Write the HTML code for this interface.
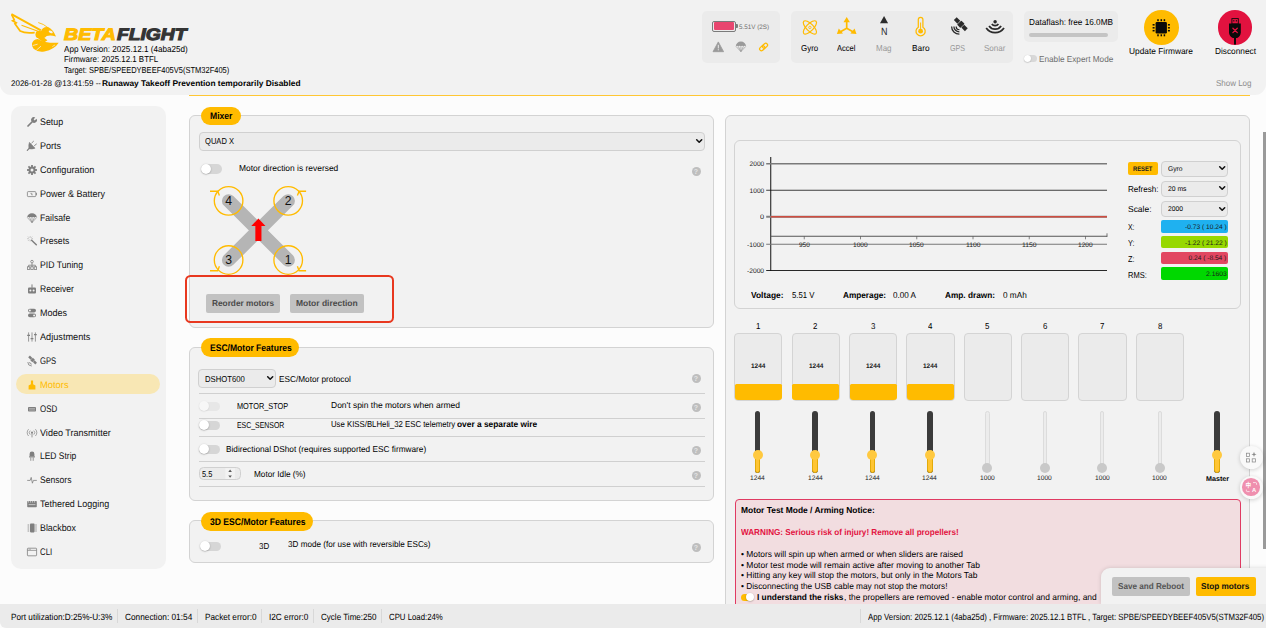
<!DOCTYPE html>
<html lang="en"><head><meta charset="utf-8"><title>Betaflight - Motors</title>
<style>
html,body{margin:0;padding:0}
body{width:1266px;height:628px;overflow:hidden;position:relative;background:#fcfcfc;font-family:"Liberation Sans",sans-serif;font-size:8.5px;color:#000}
div{position:absolute;box-sizing:border-box}
svg{position:absolute;overflow:visible}
.t{position:absolute;white-space:nowrap;line-height:1;display:inline-block;transform-origin:0 0;text-rendering:geometricPrecision}
.panel{background:#f2f2f2;border:1px solid #d3d3d3;border-radius:6px}
.pill{background:#ffbb00;border-radius:10px}
.sel{background:#ebebeb;border:1px solid #d0d0d0;border-radius:4px}
.hr{background:#d0d0d0;height:1px}
.tog{background:#d6d6d6;border-radius:6px}
.knob{background:#fff;border-radius:50%;box-shadow:0 0.5px 1.5px rgba(0,0,0,.35)}
.help{background:#bebebe;border-radius:50%;color:#e4e4e4;font-weight:700;font-size:7px;text-align:center;line-height:9.4px}

</style></head>
<body>
<div class="" style="left:0.00px;top:0.00px;width:1266.00px;height:95.30px;background:#f2f2f2;border-radius:0 0 11px 11px"></div>
<div class="" style="left:188.80px;top:94.80px;width:1061.20px;height:1.00px;background:#ffc733"></div>
<svg style="left:6.00px;top:8.00px" width="64.00" height="50.00" viewBox="0 0 804 628" ><g fill="none" stroke="#ffbb00" stroke-linejoin="miter" stroke-linecap="butt">
<path d="M68,78 L438,282" stroke-width="25"/>
<path d="M72,82 L104,150 L84,160 L128,186 L112,198 L178,290 Q240,322 362,308" stroke-width="22"/>
<path d="M195,218 L402,292" stroke-width="13"/>
<path d="M405,183 Q470,198 528,248" stroke-width="11"/>
</g>
<g fill="#ffbb00">
<path d="M436,300 Q455,232 528,238 Q592,268 628,358 Q560,338 512,352 Q480,392 446,372 Z"/>
<circle cx="414" cy="332" r="46"/>
<path d="M385,362 Q420,410 480,432 L520,404 Q478,386 466,346 Z"/>
<path d="M326,446 Q336,398 400,388 Q500,446 662,436 Q610,520 482,546 Q400,560 346,512 Q320,482 326,446 Z"/>
</g>
<ellipse cx="562" cy="300" rx="27" ry="14" transform="rotate(24 562 300)" fill="#f2f2f2"/>
<g stroke="#f2f2f2" fill="none" stroke-linecap="round">
<path d="M368,300 Q350,340 372,376" stroke-width="8"/>
<path d="M340,470 L392,456" stroke-width="9"/>
<path d="M384,528 L436,482" stroke-width="9"/>
<path d="M586,482 L612,466" stroke-width="8"/>
</g></svg>
<span class="t" style="left:63.90px;top:27.22px;font-size:16.6px;font-weight:700;color:#ffbb00;font-style:italic;transform:scaleX(1.1808);-webkit-text-stroke:1.05px #ffbb00;">BETA</span>
<span class="t" style="left:116.60px;top:27.22px;font-size:16.6px;font-weight:700;color:#343434;font-style:italic;transform:scaleX(1.1582);-webkit-text-stroke:1.05px #343434;">FLIGHT</span>
<span class="t" style="left:63.75px;top:44.67px;font-size:8.7px;transform:scaleX(0.9351);">App Version: 2025.12.1 (4aba25d)</span>
<span class="t" style="left:63.75px;top:54.67px;font-size:8.7px;transform:scaleX(0.9121);">Firmware: 2025.12.1 BTFL</span>
<span class="t" style="left:63.75px;top:65.67px;font-size:8.7px;transform:scaleX(0.8642);">Target: SPBE/SPEEDYBEEF405V5(STM32F405)</span>
<span class="t" style="left:10.50px;top:80.42px;font-size:8.2px;transform:scaleX(0.9774);">2026-01-28 @13:41:59 -- </span>
<span class="t" style="left:102.00px;top:80.42px;font-size:8.2px;font-weight:700;transform:scaleX(1.0201);">Runaway Takeoff Prevention temporarily Disabled</span>
<div class="" style="left:702.00px;top:10.50px;width:78.00px;height:52.50px;background:#ebebeb;border-radius:5px"></div>
<div class="" style="left:712.00px;top:20.50px;width:24.00px;height:11.00px;border:1px solid #7a7a7a;border-radius:2px;background:#ebebeb"></div>
<div class="" style="left:713.60px;top:22.10px;width:20.80px;height:7.80px;background:#e8466f;border-radius:1px"></div>
<div class="" style="left:736.00px;top:24.00px;width:1.60px;height:4.00px;background:#7a7a7a;border-radius:0 1px 1px 0"></div>
<span class="t" style="left:739.00px;top:25.32px;font-size:6.4px;color:#6e6e6e;transform:scaleX(0.9816);">5.51V (2S)</span>
<svg style="left:0.00px;top:0.00px" width="1266.00" height="628.00" viewBox="0 0 1266 628" ><path d="M718.3,41.9 L723.6,51.7 L713,51.7 Z" fill="#9a9a9a" stroke="#9a9a9a" stroke-width="0.8" stroke-linejoin="round"/><rect x="717.8" y="44.8" width="1" height="3.6" fill="#ebebeb"/><rect x="717.8" y="49.2" width="1" height="1.1" fill="#ebebeb"/><path d="M735.8,46.2 A5.1,4.6 0 0 1 746,46.2 Q744.7,45.2 743.4,46.2 Q742.2,45.2 740.9,46.2 Q739.6,45.2 738.3,46.2 Q737,45.2 735.8,46.2 Z" fill="#9a9a9a"/><path d="M736,46.4 L740.9,51.6 L745.8,46.4 M738.3,46.4 L740.9,51.6 L743.4,46.4 M740.9,46.4 L740.9,51.6" stroke="#9a9a9a" stroke-width="0.7" fill="none"/><g transform="rotate(-42 763.6 47)" fill="none" stroke="#ffbb00" stroke-width="1.25"><rect x="758.9" y="45.2" width="5.6" height="3.6" rx="1.8"/><rect x="762.7" y="45.2" width="5.6" height="3.6" rx="1.8"/></g></svg>
<div class="" style="left:791.00px;top:10.50px;width:222.00px;height:52.50px;background:#ebebeb;border-radius:5px"></div>
<svg style="left:0.00px;top:0.00px" width="1266.00" height="628.00" viewBox="0 0 1266 628" ><g fill="none" stroke="#ffbb00" stroke-width="1.2"><ellipse cx="809.9" cy="27.4" rx="8.7" ry="3.5" transform="rotate(45 809.9 27.4)"/><ellipse cx="809.9" cy="27.4" rx="8.7" ry="3.5" transform="rotate(-45 809.9 27.4)"/><circle cx="809.9" cy="27.4" r="1.2" stroke-width="0.8"/></g><g stroke="#ffbb00" stroke-width="1.7" fill="none" stroke-linecap="round"><path d="M846.7,28.2 L846.7,19.5 M846.7,28.2 L839.6,32.2 M846.7,28.2 L853.8,32.2"/></g><g fill="#ffbb00"><path d="M846.7,16.9 L849.9,22.2 L843.5,22.2 Z"/><path d="M836.9,34 L838.8,28.6 L843,33.6 Z"/><path d="M856.5,34 L854.6,28.6 L850.4,33.6 Z"/></g><path d="M884.05,16 L888.1,23.2 L880,23.2 Z" fill="#2b2b2b"/><path d="M918.3000000000001,27.2 L918.3000000000001,19.6 A2.3,2.3 0 0 1 922.9,19.6 L922.9,27.2 A4.6,4.6 0 1 1 918.3000000000001,27.2 Z" fill="none" stroke="#ffbb00" stroke-width="1.25"/><circle cx="920.6" cy="31.2" r="2.4" fill="#ffbb00"/><rect x="920.1" y="22.5" width="1" height="7" fill="#ffbb00"/><g transform="rotate(45 960.8 24.2)" fill="#2b2b2b"><rect x="953" y="22.2" width="5" height="4"/><rect x="963.6" y="22.2" width="5" height="4"/><rect x="958.5" y="21.2" width="4.6" height="6" rx="0.6"/></g><g fill="none" stroke="#2b2b2b" stroke-width="1.3"><path d="M956.2,26.4 A3.2,3.2 0 0 0 959.4,29.6"/><path d="M953.9,26.4 A5.5,5.5 0 0 0 959.4,31.9"/><path d="M951.6,26.4 A7.8,7.8 0 0 0 959.4,34.2"/></g><circle cx="995.1" cy="21.7" r="1.75" fill="#2b2b2b"/><path d="M998.38,23.99 A4.0,4.0 0 0 1 991.82,23.99" fill="none" stroke="#2b2b2b" stroke-width="1.7"/><path d="M1001.16,25.94 A7.4,7.4 0 0 1 989.04,25.94" fill="none" stroke="#2b2b2b" stroke-width="1.7"/><path d="M1004.03,27.95 A10.9,10.9 0 0 1 986.17,27.95" fill="none" stroke="#2b2b2b" stroke-width="1.7"/></svg>
<span class="t" style="left:880.80px;top:28.32px;font-size:10.4px;color:#2b2b2b;transform:scaleX(0.8649);">N</span>
<span class="t" style="left:800.50px;top:43.72px;font-size:8.6px;transform:scaleX(0.9262);">Gyro</span>
<span class="t" style="left:836.75px;top:43.72px;font-size:8.6px;transform:scaleX(0.8803);">Accel</span>
<span class="t" style="left:875.75px;top:43.72px;font-size:8.6px;color:#999;transform:scaleX(0.9271);">Mag</span>
<span class="t" style="left:911.50px;top:43.72px;font-size:8.6px;transform:scaleX(0.9639);">Baro</span>
<span class="t" style="left:950.00px;top:43.72px;font-size:8.6px;color:#999;transform:scaleX(0.8262);">GPS</span>
<span class="t" style="left:983.75px;top:43.72px;font-size:8.6px;color:#999;transform:scaleX(0.9373);">Sonar</span>
<div class="" style="left:1023.75px;top:10.50px;width:94.25px;height:31.50px;background:#ebebeb;border-radius:5px"></div>
<span class="t" style="left:1029.00px;top:17.72px;font-size:8.6px;transform:scaleX(0.9556);">Dataflash: free 16.0MB</span>
<div class="" style="left:1029.00px;top:32.75px;width:79.25px;height:3.75px;background:#c4c4c4;border-radius:2px"></div>
<div class="" style="left:1024.00px;top:55.20px;width:12.80px;height:6.90px;background:#d8d8d8;border-radius:4px"></div>
<div class="knob" style="left:1023.60px;top:54.90px;width:7.40px;height:7.40px;box-shadow:0 0.5px 1.2px rgba(0,0,0,.28)"></div>
<span class="t" style="left:1039.00px;top:54.72px;font-size:8.6px;color:#6e6e6e;transform:scaleX(0.9535);">Enable Expert Mode</span>
<div class="" style="left:1144.00px;top:10.25px;width:34.50px;height:34.50px;background:#ffbb00;border-radius:50%"></div>
<div class="" style="left:1217.75px;top:10.25px;width:34.50px;height:34.50px;background:#e2123f;border-radius:50%"></div>
<svg style="left:0.00px;top:0.00px" width="1266.00" height="628.00" viewBox="0 0 1266 628" ><rect x="1155.6" y="22.1" width="11.3" height="11.3" rx="1.2" fill="#0a0a0a"/><rect x="1157.25" y="19.2" width="1.5" height="2" fill="#0a0a0a"/><rect x="1157.25" y="34.3" width="1.5" height="2" fill="#0a0a0a"/><rect x="1160.55" y="19.2" width="1.5" height="2" fill="#0a0a0a"/><rect x="1160.55" y="34.3" width="1.5" height="2" fill="#0a0a0a"/><rect x="1163.65" y="19.2" width="1.5" height="2" fill="#0a0a0a"/><rect x="1163.65" y="34.3" width="1.5" height="2" fill="#0a0a0a"/><rect x="1152.6" y="24.05" width="2" height="1.5" fill="#0a0a0a"/><rect x="1167.9" y="24.05" width="2" height="1.5" fill="#0a0a0a"/><rect x="1152.6" y="27.05" width="2" height="1.5" fill="#0a0a0a"/><rect x="1167.9" y="27.05" width="2" height="1.5" fill="#0a0a0a"/><rect x="1152.6" y="29.95" width="2" height="1.5" fill="#0a0a0a"/><rect x="1167.9" y="29.95" width="2" height="1.5" fill="#0a0a0a"/><rect x="1231.9" y="18.6" width="6.4" height="5.4" fill="none" stroke="#0a0a0a" stroke-width="0.9"/><rect x="1233.2" y="20.2" width="1.2" height="1.2" fill="#0a0a0a"/><rect x="1235.8" y="20.2" width="1.2" height="1.2" fill="#0a0a0a"/><path d="M1229,23.6 L1240.8,23.6 L1240.8,32.6 Q1240.6,36.4 1237.2,37.9 L1232.8,37.9 Q1229.2,36.4 1229,32.6 Z" fill="#0a0a0a"/><rect x="1234" y="37.5" width="2" height="7" fill="#0a0a0a"/><path d="M1232.9,28.2 L1237.3,32.6 M1237.3,28.2 L1232.9,32.6" stroke="#e2123f" stroke-width="1.3" stroke-linecap="round"/></svg>
<span class="t" style="left:1129.25px;top:46.72px;font-size:8.6px;transform:scaleX(0.9711);">Update Firmware</span>
<span class="t" style="left:1214.50px;top:46.72px;font-size:8.6px;transform:scaleX(0.9644);">Disconnect</span>
<span class="t" style="left:1216.00px;top:78.72px;font-size:8.6px;color:#8c8c8c;transform:scaleX(0.9285);">Show Log</span>
<div class="" style="left:10.50px;top:106.00px;width:155.00px;height:463.30px;background:#f2f2f2;border-radius:10px"></div>
<div class="" style="left:16.00px;top:373.70px;width:144.00px;height:20.80px;background:#f8e7b4;border-radius:10.5px"></div>
<span class="t" style="left:39.70px;top:117.72px;font-size:9.6px;color:#111;transform:scaleX(0.9211);">Setup</span>
<span class="t" style="left:39.70px;top:141.72px;font-size:9.6px;color:#111;transform:scaleX(0.9417);">Ports</span>
<span class="t" style="left:39.70px;top:165.72px;font-size:9.6px;color:#111;transform:scaleX(0.9531);">Configuration</span>
<span class="t" style="left:39.70px;top:189.72px;font-size:9.6px;color:#111;transform:scaleX(0.9376);">Power &amp; Battery</span>
<span class="t" style="left:39.70px;top:213.72px;font-size:9.6px;color:#111;transform:scaleX(0.9020);">Failsafe</span>
<span class="t" style="left:39.70px;top:236.72px;font-size:9.6px;color:#111;transform:scaleX(0.9037);">Presets</span>
<span class="t" style="left:39.70px;top:260.72px;font-size:9.6px;color:#111;transform:scaleX(0.9059);">PID Tuning</span>
<span class="t" style="left:39.70px;top:284.72px;font-size:9.6px;color:#111;transform:scaleX(0.8928);">Receiver</span>
<span class="t" style="left:39.70px;top:308.72px;font-size:9.6px;color:#111;transform:scaleX(0.9411);">Modes</span>
<span class="t" style="left:39.70px;top:332.72px;font-size:9.6px;color:#111;transform:scaleX(0.9546);">Adjustments</span>
<span class="t" style="left:39.70px;top:356.72px;font-size:9.6px;color:#111;transform:scaleX(0.7994);">GPS</span>
<span class="t" style="left:39.70px;top:380.72px;font-size:9.6px;color:#ffbb00;transform:scaleX(0.9752);">Motors</span>
<span class="t" style="left:39.70px;top:404.72px;font-size:9.6px;color:#111;transform:scaleX(0.8270);">OSD</span>
<span class="t" style="left:39.70px;top:428.72px;font-size:9.6px;color:#111;transform:scaleX(0.9425);">Video Transmitter</span>
<span class="t" style="left:39.70px;top:451.72px;font-size:9.6px;color:#111;transform:scaleX(0.8840);">LED Strip</span>
<span class="t" style="left:39.70px;top:475.72px;font-size:9.6px;color:#111;transform:scaleX(0.8948);">Sensors</span>
<span class="t" style="left:39.70px;top:499.72px;font-size:9.6px;color:#111;transform:scaleX(0.9332);">Tethered Logging</span>
<span class="t" style="left:39.70px;top:523.72px;font-size:9.6px;color:#111;transform:scaleX(0.9220);">Blackbox</span>
<span class="t" style="left:39.70px;top:547.72px;font-size:9.6px;color:#111;transform:scaleX(0.8167);">CLI</span>
<svg style="left:26.80px;top:116.70px" width="10.00" height="10.00" viewBox="0 0 10 10" ><path d="M1,9 L6,4" stroke="#7f7f7f" stroke-width="1.7" stroke-linecap="round" fill="none"/><path d="M5.2,4.8 A2.6,2.6 0 0 1 8.3,0.6 L6.6,2.3 L7.7,3.4 L9.4,1.7 A2.6,2.6 0 0 1 5.2,4.8 Z" fill="#7f7f7f"/></svg><svg style="left:26.80px;top:140.70px" width="10.00" height="10.00" viewBox="0 0 10 10" ><path d="M0.3,9.3 L2.4,7.2" stroke="#7f7f7f" stroke-width="1.2" fill="none" stroke-linecap="round"/><path d="M2.4,1.3 L8.1,7.2 Q4.6,8.6 1.9,7.7 Q1.2,4.4 2.4,1.3 Z" fill="#7f7f7f" stroke="#7f7f7f" stroke-width="0.5" stroke-linejoin="round"/><path d="M4.8,1.9 L6.5,0.3 M7.5,4.6 L9.4,3.1" stroke="#7f7f7f" stroke-width="0.9" fill="none" stroke-linecap="round"/></svg><svg style="left:26.80px;top:164.70px" width="10.00" height="10.00" viewBox="0 0 10 10" ><rect x="4.1" y="0" width="1.8" height="2.4" transform="rotate(0 5 5)" fill="#7f7f7f"/><rect x="4.1" y="0" width="1.8" height="2.4" transform="rotate(45 5 5)" fill="#7f7f7f"/><rect x="4.1" y="0" width="1.8" height="2.4" transform="rotate(90 5 5)" fill="#7f7f7f"/><rect x="4.1" y="0" width="1.8" height="2.4" transform="rotate(135 5 5)" fill="#7f7f7f"/><rect x="4.1" y="0" width="1.8" height="2.4" transform="rotate(180 5 5)" fill="#7f7f7f"/><rect x="4.1" y="0" width="1.8" height="2.4" transform="rotate(225 5 5)" fill="#7f7f7f"/><rect x="4.1" y="0" width="1.8" height="2.4" transform="rotate(270 5 5)" fill="#7f7f7f"/><rect x="4.1" y="0" width="1.8" height="2.4" transform="rotate(315 5 5)" fill="#7f7f7f"/><circle cx="5" cy="5" r="3.5" fill="#7f7f7f"/><circle cx="5" cy="5" r="1.5" fill="#f2f2f2"/></svg><svg style="left:26.80px;top:188.70px" width="10.00" height="10.00" viewBox="0 0 10 10" ><rect x="0.4" y="2.6" width="8.4" height="5" rx="0.8" fill="none" stroke="#7f7f7f" stroke-width="0.8"/><rect x="9" y="4" width="0.8" height="2.2" fill="#7f7f7f"/><path d="M3.4,4.4 L5,4.4 L4.4,5.8 L6,5.8" stroke="#7f7f7f" stroke-width="0.6" fill="none"/></svg><svg style="left:26.80px;top:212.70px" width="10.00" height="10.00" viewBox="0 0 10 10" ><path d="M0.2,4.4 A4.8,4.2 0 0 1 9.8,4.4 Q8.6,3.5 7.4,4.4 Q6.2,3.5 5,4.4 Q3.8,3.5 2.6,4.4 Q1.4,3.5 0.2,4.4 Z" fill="#7f7f7f"/><path d="M0.4,4.6 L5,9.6 L9.6,4.6 M2.6,4.6 L5,9.6 L7.4,4.6 M5,4.6 L5,9.6" stroke="#7f7f7f" stroke-width="0.6" fill="none"/></svg><svg style="left:26.80px;top:235.70px" width="10.00" height="10.00" viewBox="0 0 10 10" ><path d="M4.6,4.3 L9.3,8.7" stroke="#7f7f7f" stroke-width="1.5" fill="none" stroke-linecap="round"/><path d="M3.2,0.2 L3.2,1.6 M3.2,3.8 L3.2,5.4 M0.2,2.7 L1.8,2.7 M4.4,2.7 L6,2.7 M1,0.6 L2.2,1.8 M5.2,0.7 L4.2,1.7 M1.1,4.8 L2.2,3.7" stroke="#a0a0a0" stroke-width="0.6" fill="none"/></svg><svg style="left:26.80px;top:259.70px" width="10.00" height="10.00" viewBox="0 0 10 10" ><circle cx="5" cy="1.6" r="1.3" fill="none" stroke="#7f7f7f" stroke-width="0.8"/><path d="M5,3 L5,7 M1.6,7 L1.6,5.2 L8.4,5.2 L8.4,7" stroke="#7f7f7f" stroke-width="0.8" fill="none"/><rect x="0.4" y="6.8" width="2.4" height="2.6" fill="none" stroke="#7f7f7f" stroke-width="0.8"/><rect x="3.8" y="6.8" width="2.4" height="2.6" fill="none" stroke="#7f7f7f" stroke-width="0.8"/><rect x="7.2" y="6.8" width="2.4" height="2.6" fill="none" stroke="#7f7f7f" stroke-width="0.8"/></svg><svg style="left:26.80px;top:283.70px" width="10.00" height="10.00" viewBox="0 0 10 10" ><rect x="1" y="3.6" width="8" height="6" rx="1" fill="#7f7f7f"/><rect x="4.5" y="0.4" width="1" height="3.4" fill="#7f7f7f"/><circle cx="3.4" cy="6.4" r="1" fill="#f2f2f2"/><circle cx="6.6" cy="6.4" r="1" fill="#f2f2f2"/></svg><svg style="left:26.80px;top:307.70px" width="10.00" height="10.00" viewBox="0 0 10 10" ><rect x="1" y="0.8" width="8" height="3.6" rx="1.8" fill="#7f7f7f"/><rect x="1" y="5.6" width="8" height="3.6" rx="1.8" fill="#7f7f7f"/><circle cx="2.9" cy="2.6" r="1" fill="#f2f2f2"/><circle cx="7.1" cy="7.4" r="1" fill="#f2f2f2"/></svg><svg style="left:26.80px;top:331.70px" width="10.00" height="10.00" viewBox="0 0 10 10" ><path d="M1.6,0.4 L1.6,9.6 M5,0.4 L5,9.6 M8.4,0.4 L8.4,9.6" stroke="#7f7f7f" stroke-width="0.8" fill="none"/><path d="M0.2,3.4 L3,3.4 M3.6,6.6 L6.4,6.6 M7,2.6 L9.8,2.6" stroke="#7f7f7f" stroke-width="1.3" fill="none"/></svg><svg style="left:26.80px;top:355.70px" width="10.00" height="10.00" viewBox="0 0 10 10" ><g transform="rotate(45 5.6 4)" fill="#7f7f7f"><rect x="0.6" y="2.8" width="3.4" height="2.4"/><rect x="7.2" y="2.8" width="3.4" height="2.4"/><rect x="4.2" y="2.2" width="2.8" height="3.6"/></g><path d="M2.6,6 A2.2,2.2 0 0 0 4.8,8.2 M0.8,6 A4,4 0 0 0 4.8,10" stroke="#7f7f7f" stroke-width="0.8" fill="none"/></svg><svg style="left:26.80px;top:379.70px" width="10.00" height="10.00" viewBox="0 0 10 10" ><path d="M3.9,0.6 L6.1,0.6 L6.1,4.2 L8.4,5.4 L8.4,9.6 L1.6,9.6 L1.6,5.4 L3.9,4.2 Z" fill="#ffbb00"/></svg><svg style="left:26.80px;top:403.70px" width="10.00" height="10.00" viewBox="0 0 10 10" ><rect x="1" y="3" width="8" height="4.6" rx="0.8" fill="#7f7f7f"/><path d="M2,4.6 L8,4.6 M2,6 L8,6" stroke="#f2f2f2" stroke-width="0.4"/></svg><svg style="left:26.80px;top:427.70px" width="10.00" height="10.00" viewBox="0 0 10 10" ><circle cx="5" cy="4.6" r="1" fill="#7f7f7f"/><rect x="4.6" y="5" width="0.8" height="4.4" fill="#7f7f7f"/><path d="M3.2,2.6 A2.8,2.8 0 0 0 3.2,6.6 M6.8,2.6 A2.8,2.8 0 0 1 6.8,6.6 M1.6,1.2 A4.8,4.8 0 0 0 1.6,8 M8.4,1.2 A4.8,4.8 0 0 1 8.4,8" stroke="#7f7f7f" stroke-width="0.7" fill="none"/></svg><svg style="left:26.80px;top:450.70px" width="10.00" height="10.00" viewBox="0 0 10 10" ><path d="M2.6,5.6 L2.6,3 A2.4,2.4 0 0 1 7.4,3 L7.4,5.6 Z" fill="#7f7f7f"/><rect x="2" y="5.4" width="6" height="1" fill="#7f7f7f"/><path d="M3.8,6.4 L3.8,9.8 M6.2,6.4 L6.2,9.8" stroke="#7f7f7f" stroke-width="0.8"/></svg><svg style="left:26.80px;top:474.70px" width="10.00" height="10.00" viewBox="0 0 10 10" ><path d="M0.2,5.4 L3.2,5.4 L4.2,2.4 L5.4,8.2 L6.4,5.4 L9.8,5.4" stroke="#7f7f7f" stroke-width="0.8" fill="none" stroke-linejoin="round"/></svg><svg style="left:26.80px;top:498.70px" width="10.00" height="10.00" viewBox="0 0 10 10" ><rect x="0.2" y="2" width="9.6" height="6.2" rx="0.8" fill="#7f7f7f"/><path d="M1.6,2 L1.6,3.6 M3.6,2 L3.6,3.6 M5.6,2 L5.6,3.6 M7.6,2 L7.6,3.6" stroke="#f2f2f2" stroke-width="0.6"/><path d="M1.6,5.6 L8.4,5.6" stroke="#f2f2f2" stroke-width="0.6"/></svg><svg style="left:26.80px;top:522.70px" width="10.00" height="10.00" viewBox="0 0 10 10" ><rect x="3" y="0.6" width="4.6" height="8.8" rx="0.8" fill="#7f7f7f"/><path d="M0.6,2 L2.2,2 M0.6,4 L2.2,4 M0.6,6 L2.2,6 M0.6,8 L2.2,8 M8.2,2 L9.8,2 M8.2,4 L9.8,4 M8.2,6 L9.8,6 M8.2,8 L9.8,8" stroke="#7f7f7f" stroke-width="0.8"/></svg><svg style="left:26.80px;top:546.70px" width="10.00" height="10.00" viewBox="0 0 10 10" ><rect x="0.4" y="1.2" width="9.2" height="7.6" rx="0.6" fill="none" stroke="#7f7f7f" stroke-width="0.8"/><path d="M0.4,3.4 L9.6,3.4" stroke="#7f7f7f" stroke-width="0.7"/><path d="M1.6,2.3 L4,2.3" stroke="#7f7f7f" stroke-width="0.5"/></svg>
<div class="panel" style="left:189.20px;top:115.00px;width:525.00px;height:212.90px;"></div>
<div class="pill" style="left:201.00px;top:106.50px;width:40.00px;height:18.50px;"></div>
<span class="t" style="left:209.80px;top:111.77px;font-size:9.5px;font-weight:700;transform:scaleX(0.9022);">Mixer</span>
<div class="sel" style="left:198.60px;top:131.80px;width:506.60px;height:18.80px;"></div>
<span class="t" style="left:204.90px;top:136.72px;font-size:8.6px;transform:scaleX(0.8800);">QUAD X</span>
<svg style="left:695.80px;top:139.00px" width="6.40" height="4.40" viewBox="0 0 6.4 4.4" ><path d="M0.7,0.8 L3.2,3.3 L5.7,0.8" fill="none" stroke="#111" stroke-width="1.55" stroke-linecap="round" stroke-linejoin="round"/></svg>
<div class="tog" style="left:200.60px;top:164.40px;width:21.10px;height:9.20px;"></div>
<div class="knob" style="left:200.60px;top:163.90px;width:10.30px;height:10.30px;"></div>
<span class="t" style="left:238.70px;top:163.72px;font-size:8.6px;transform:scaleX(0.9806);">Motor direction is reversed</span>
<div class="help" style="left:691.50px;top:167.00px;width:9.00px;height:9.00px;">?</div>
<svg style="left:0.00px;top:0.00px" width="1266.00" height="628.00" viewBox="0 0 1266 628" ><g stroke="#b5b5b5" stroke-width="13.4" stroke-linecap="round"><line x1="228.6" y1="200.85" x2="288.2" y2="260.0"/><line x1="288.2" y1="200.85" x2="228.6" y2="260.0"/></g><g fill="none" stroke="#ffbb00" stroke-width="1.35"><circle cx="228.6" cy="200.85" r="14.3"/><circle cx="288.2" cy="200.85" r="14.3"/><circle cx="228.6" cy="260.0" r="14.3"/><circle cx="288.2" cy="260.0" r="14.3"/><path d="M210,191.2 L217.7,191.2 L219.4,195.6"/><path d="M306.1,191.2 L299.1,191.2 L297.4,195.6"/><path d="M210,270.7 L217.7,270.7 L219.4,266.3"/><path d="M306.1,270.7 L299.1,270.7 L297.4,266.3"/></g><path d="M258.4,218.5 L265.5,226.1 L261.45,226.1 L261.45,240.9 L255.34999999999997,240.9 L255.34999999999997,226.1 L251.29999999999998,226.1 Z" fill="#ff0000"/><text x="228.6" y="205.25" text-anchor="middle" font-family="Liberation Sans,sans-serif" font-size="12.2" fill="#111">4</text><text x="288.2" y="205.25" text-anchor="middle" font-family="Liberation Sans,sans-serif" font-size="12.2" fill="#111">2</text><text x="228.6" y="264.4" text-anchor="middle" font-family="Liberation Sans,sans-serif" font-size="12.2" fill="#111">3</text><text x="288.2" y="264.4" text-anchor="middle" font-family="Liberation Sans,sans-serif" font-size="12.2" fill="#111">1</text></svg>
<div class="" style="left:185.20px;top:275.30px;width:208.90px;height:48.00px;border:2.4px solid #e8381f;border-radius:5.5px"></div>
<div class="" style="left:205.70px;top:294.00px;width:74.60px;height:18.80px;background:#c2c2c2;border-radius:2px"></div>
<div class="" style="left:289.80px;top:294.00px;width:74.70px;height:18.80px;background:#c2c2c2;border-radius:2px"></div>
<span class="t" style="left:212.10px;top:298.72px;font-size:8.6px;font-weight:700;color:#4a4a4a;transform:scaleX(0.9633);">Reorder motors</span>
<span class="t" style="left:296.40px;top:298.72px;font-size:8.6px;font-weight:700;color:#4a4a4a;transform:scaleX(0.9865);">Motor direction</span>
<div class="panel" style="left:189.20px;top:346.50px;width:525.00px;height:154.20px;"></div>
<div class="pill" style="left:201.20px;top:338.30px;width:98.10px;height:18.70px;"></div>
<span class="t" style="left:209.50px;top:343.77px;font-size:9.5px;font-weight:700;transform:scaleX(0.9004);">ESC/Motor Features</span>
<div class="sel" style="left:198.40px;top:369.30px;width:77.60px;height:18.70px;"></div>
<span class="t" style="left:204.90px;top:374.72px;font-size:8.6px;transform:scaleX(0.8937);">DSHOT600</span>
<svg style="left:266.60px;top:376.30px" width="6.40" height="4.40" viewBox="0 0 6.4 4.4" ><path d="M0.7,0.8 L3.2,3.3 L5.7,0.8" fill="none" stroke="#111" stroke-width="1.55" stroke-linecap="round" stroke-linejoin="round"/></svg>
<span class="t" style="left:278.70px;top:374.72px;font-size:8.6px;transform:scaleX(0.9573);">ESC/Motor protocol</span>
<div class="hr" style="left:198.80px;top:392.90px;width:506.00px;height:1.00px;"></div>
<div class="hr" style="left:198.80px;top:417.90px;width:506.00px;height:1.00px;"></div>
<div class="hr" style="left:198.80px;top:435.90px;width:506.00px;height:1.00px;"></div>
<div class="hr" style="left:198.80px;top:460.90px;width:506.00px;height:1.00px;"></div>
<div class="hr" style="left:198.80px;top:485.80px;width:506.00px;height:1.00px;"></div>
<div class="tog" style="left:199.30px;top:401.50px;width:20.30px;height:9.00px;opacity:.4;"></div>
<div class="knob" style="left:198.70px;top:401.00px;width:10.00px;height:10.00px;box-shadow:0 0.5px 1.5px rgba(0,0,0,.12);background:#f7f7f7"></div>
<span class="t" style="left:237.30px;top:401.72px;font-size:8.6px;transform:scaleX(0.8553);">MOTOR_STOP</span>
<span class="t" style="left:330.50px;top:400.72px;font-size:8.6px;transform:scaleX(0.9876);">Don't spin the motors when armed</span>
<div class="tog" style="left:199.30px;top:420.60px;width:20.30px;height:9.00px;"></div>
<div class="knob" style="left:198.70px;top:420.10px;width:10.00px;height:10.00px;"></div>
<span class="t" style="left:237.30px;top:420.72px;font-size:8.6px;transform:scaleX(0.8051);">ESC_SENSOR</span>
<span class="t" style="left:330.50px;top:419.72px;font-size:8.6px;transform:scaleX(0.9059);">Use KISS/BLHeli_32 ESC telemetry</span>
<span class="t" style="left:457.25px;top:419.72px;font-size:8.6px;font-weight:700;transform:scaleX(0.9709);">over a separate wire</span>
<div class="tog" style="left:199.30px;top:444.50px;width:20.30px;height:9.00px;"></div>
<div class="knob" style="left:198.70px;top:444.00px;width:10.00px;height:10.00px;"></div>
<span class="t" style="left:225.80px;top:444.72px;font-size:8.6px;transform:scaleX(0.9613);">Bidirectional DShot (requires supported ESC firmware)</span>
<div class="sel" style="left:198.60px;top:467.20px;width:42.20px;height:12.80px;border-radius:4.5px"></div>
<span class="t" style="left:202.20px;top:469.72px;font-size:8.6px;transform:scaleX(0.8617);">5.5</span>
<svg style="left:0.00px;top:0.00px" width="1266.00" height="628.00" viewBox="0 0 1266 628" ><rect x="225.3" y="468.2" width="9.6" height="10.8" fill="#f3f3f3"/><path d="M228.3,471.9 L230.1,469.5 L231.9,471.9 Z M228.3,475.4 L230.1,477.8 L231.9,475.4 Z" fill="#5a5a5a"/></svg>
<span class="t" style="left:254.00px;top:469.72px;font-size:8.6px;transform:scaleX(0.9561);">Motor Idle (%)</span>
<div class="help" style="left:691.50px;top:373.50px;width:9.00px;height:9.00px;">?</div>
<div class="help" style="left:691.50px;top:403.10px;width:9.00px;height:9.00px;">?</div>
<div class="help" style="left:691.50px;top:446.10px;width:9.00px;height:9.00px;">?</div>
<div class="help" style="left:691.50px;top:471.10px;width:9.00px;height:9.00px;">?</div>
<div class="panel" style="left:189.20px;top:520.30px;width:525.00px;height:42.70px;"></div>
<div class="pill" style="left:201.20px;top:512.30px;width:111.80px;height:18.30px;"></div>
<span class="t" style="left:209.50px;top:517.77px;font-size:9.5px;font-weight:700;transform:scaleX(0.9045);">3D ESC/Motor Features</span>
<div class="tog" style="left:200.60px;top:541.50px;width:20.30px;height:9.00px;"></div>
<div class="knob" style="left:200.00px;top:541.00px;width:10.00px;height:10.00px;"></div>
<span class="t" style="left:259.00px;top:541.72px;font-size:8.6px;transform:scaleX(0.9318);">3D</span>
<span class="t" style="left:288.00px;top:539.72px;font-size:8.6px;transform:scaleX(0.9442);">3D mode (for use with reversible ESCs)</span>
<div class="help" style="left:691.50px;top:543.10px;width:9.00px;height:9.00px;">?</div>
<div class="panel" style="left:725.20px;top:115.00px;width:525.00px;height:525.00px;"></div>
<div class="panel" style="left:734.40px;top:140.40px;width:506.40px;height:168.60px;"></div>
<svg style="left:0;top:0" width="1266" height="628" viewBox="0 0 1266 628"><line x1="770.75" y1="157" x2="770.75" y2="270.9" stroke="#111" stroke-width="1.0"/><line x1="766.2" y1="163.75" x2="1107" y2="163.75" stroke="#7a7a7a" stroke-width="1.5"/><line x1="766.2" y1="190.25" x2="1107" y2="190.25" stroke="#111" stroke-width="0.8"/><line x1="766.2" y1="216.75" x2="1107" y2="216.75" stroke="#808080" stroke-width="1.8"/><line x1="770.75" y1="216.75" x2="1107" y2="216.75" stroke="#cf4d40" stroke-width="1.7"/><line x1="766.2" y1="244.25" x2="1107" y2="244.25" stroke="#777" stroke-width="1.1"/><line x1="766.2" y1="270.5" x2="1107" y2="270.5" stroke="#111" stroke-width="0.9"/><line x1="770.75" y1="236.25" x2="1107.3" y2="236.25" stroke="#555" stroke-width="1.0"/><line x1="1107" y1="233.3" x2="1107" y2="236.6" stroke="#444" stroke-width="0.7"/><line x1="804.25" y1="236.25" x2="804.25" y2="239.3" stroke="#555" stroke-width="0.7"/><line x1="860.5" y1="236.25" x2="860.5" y2="239.3" stroke="#555" stroke-width="0.7"/><line x1="916.75" y1="236.25" x2="916.75" y2="239.3" stroke="#555" stroke-width="0.7"/><line x1="973.0" y1="236.25" x2="973.0" y2="239.3" stroke="#555" stroke-width="0.7"/><line x1="1029.25" y1="236.25" x2="1029.25" y2="239.3" stroke="#555" stroke-width="0.7"/><line x1="1085.5" y1="236.25" x2="1085.5" y2="239.3" stroke="#555" stroke-width="0.7"/></svg>
<span class="t" style="left:749.60px;top:162.22px;font-size:6.6px;color:#222;">2000</span>
<span class="t" style="left:749.60px;top:189.22px;font-size:6.6px;color:#222;">1000</span>
<span class="t" style="left:760.20px;top:215.22px;font-size:6.6px;color:#222;transform:scaleX(1.1166);">0</span>
<span class="t" style="left:747.20px;top:243.22px;font-size:6.6px;color:#222;transform:scaleX(1.0133);">-1000</span>
<span class="t" style="left:747.20px;top:269.22px;font-size:6.6px;color:#222;transform:scaleX(1.0133);">-2000</span>
<span class="t" style="left:798.85px;top:243.22px;font-size:6.6px;color:#222;transform:scaleX(0.9804);">950</span>
<span class="t" style="left:853.20px;top:243.22px;font-size:6.6px;color:#222;transform:scaleX(0.9951);">1000</span>
<span class="t" style="left:909.45px;top:243.22px;font-size:6.6px;color:#222;transform:scaleX(0.9951);">1050</span>
<span class="t" style="left:965.70px;top:243.22px;font-size:6.6px;color:#222;transform:scaleX(1.0291);">1100</span>
<span class="t" style="left:1021.95px;top:243.22px;font-size:6.6px;color:#222;transform:scaleX(1.0291);">1150</span>
<span class="t" style="left:1078.20px;top:243.22px;font-size:6.6px;color:#222;transform:scaleX(0.9951);">1200</span>
<div class="" style="left:1127.50px;top:162.00px;width:30.50px;height:13.10px;background:#ffbb00;border-radius:2px"></div>
<span class="t" style="left:1133.00px;top:167.22px;font-size:6.6px;font-weight:700;color:#222;transform:scaleX(0.8824);">RESET</span>
<div class="sel" style="left:1161.20px;top:160.50px;width:66.80px;height:16.30px;border-radius:4px"></div>
<svg style="left:1218.80px;top:166.40px" width="6.40" height="4.40" viewBox="0 0 6.4 4.4" ><path d="M0.7,0.8 L3.2,3.3 L5.7,0.8" fill="none" stroke="#111" stroke-width="1.55" stroke-linecap="round" stroke-linejoin="round"/></svg>
<div class="sel" style="left:1161.20px;top:180.55px;width:66.80px;height:16.30px;border-radius:4px"></div>
<svg style="left:1218.80px;top:186.45px" width="6.40" height="4.40" viewBox="0 0 6.4 4.4" ><path d="M0.7,0.8 L3.2,3.3 L5.7,0.8" fill="none" stroke="#111" stroke-width="1.55" stroke-linecap="round" stroke-linejoin="round"/></svg>
<div class="sel" style="left:1161.20px;top:200.60px;width:66.80px;height:16.30px;border-radius:4px"></div>
<svg style="left:1218.80px;top:206.50px" width="6.40" height="4.40" viewBox="0 0 6.4 4.4" ><path d="M0.7,0.8 L3.2,3.3 L5.7,0.8" fill="none" stroke="#111" stroke-width="1.55" stroke-linecap="round" stroke-linejoin="round"/></svg>
<span class="t" style="left:1167.50px;top:167.07px;font-size:6.9px;transform:scaleX(0.9707);">Gyro</span>
<span class="t" style="left:1167.50px;top:187.07px;font-size:6.9px;transform:scaleX(0.9858);">20 ms</span>
<span class="t" style="left:1167.50px;top:207.07px;font-size:6.9px;transform:scaleX(0.9776);">2000</span>
<span class="t" style="left:1127.50px;top:184.72px;font-size:8.6px;transform:scaleX(0.9389);">Refresh:</span>
<span class="t" style="left:1127.50px;top:204.72px;font-size:8.6px;transform:scaleX(0.9836);">Scale:</span>
<span class="t" style="left:1127.50px;top:222.72px;font-size:8.6px;transform:scaleX(0.8000);">X:</span>
<span class="t" style="left:1127.50px;top:238.72px;font-size:8.6px;transform:scaleX(0.8490);">Y:</span>
<span class="t" style="left:1127.50px;top:254.72px;font-size:8.6px;transform:scaleX(0.8507);">Z:</span>
<span class="t" style="left:1127.50px;top:270.72px;font-size:8.6px;transform:scaleX(0.8727);">RMS:</span>
<div class="" style="left:1161.20px;top:220.00px;width:66.80px;height:12.50px;background:#1fb1f0;border-radius:2px"></div>
<span class="t" style="left:1184.50px;top:225.22px;font-size:6.6px;color:#1a1a1a;transform:scaleX(1.0091);">-0.73 ( 10.24 )</span>
<div class="" style="left:1161.20px;top:235.83px;width:66.80px;height:12.50px;background:#97d800;border-radius:2px"></div>
<span class="t" style="left:1184.50px;top:241.22px;font-size:6.6px;color:#1a1a1a;transform:scaleX(1.0091);">-1.22 ( 21.22 )</span>
<div class="" style="left:1161.20px;top:251.66px;width:66.80px;height:12.50px;background:#e24761;border-radius:2px"></div>
<span class="t" style="left:1188.50px;top:256.22px;font-size:6.6px;color:#1a1a1a;">0.24 ( -8.54 )</span>
<div class="" style="left:1161.20px;top:267.49px;width:66.80px;height:12.50px;background:#00d800;border-radius:2px"></div>
<span class="t" style="left:1205.50px;top:272.22px;font-size:6.6px;color:#1a1a1a;transform:scaleX(1.0311);">2.1603</span>
<span class="t" style="left:751.25px;top:290.72px;font-size:8.6px;font-weight:700;transform:scaleX(0.9770);">Voltage:</span>
<span class="t" style="left:792.00px;top:290.72px;font-size:8.6px;transform:scaleX(0.9051);">5.51 V</span>
<span class="t" style="left:842.50px;top:290.72px;font-size:8.6px;font-weight:700;transform:scaleX(0.9579);">Amperage:</span>
<span class="t" style="left:893.25px;top:290.72px;font-size:8.6px;transform:scaleX(0.9436);">0.00 A</span>
<span class="t" style="left:944.50px;top:290.72px;font-size:8.6px;font-weight:700;transform:scaleX(0.9607);">Amp. drawn:</span>
<span class="t" style="left:1002.50px;top:290.72px;font-size:8.6px;transform:scaleX(0.9560);">0 mAh</span>
<span class="t" style="left:755.60px;top:321.72px;font-size:8.6px;transform:scaleX(0.9203);">1</span>
<div class="" style="left:734.30px;top:333.20px;width:48.20px;height:67.40px;background:#ebebeb;border:1px solid #d4d4d4;border-radius:4px"></div>
<div class="" style="left:734.80px;top:384.00px;width:47.30px;height:16.30px;background:#ffbb00;border-radius:1.5px 1.5px 3px 3px"></div>
<span class="t" style="left:751.25px;top:364.22px;font-size:6.6px;font-weight:700;color:#222;transform:scaleX(0.9815);">1244</span>
<div class="" style="left:754.70px;top:410.70px;width:5.60px;height:62.30px;background:#3b3b3b;border-radius:3px"></div>
<div class="" style="left:754.70px;top:455.00px;width:5.60px;height:18.00px;background:#ffc533;border:0.8px solid #e3ab0a;border-radius:0 0 3px 3px"></div>
<div class="" style="left:752.50px;top:450.00px;width:10.00px;height:10.00px;background:#ffc940;border-radius:50%"></div>
<span class="t" style="left:750.10px;top:476.22px;font-size:6.6px;color:#222;transform:scaleX(1.0087);">1244</span>
<span class="t" style="left:813.06px;top:321.72px;font-size:8.6px;transform:scaleX(0.9203);">2</span>
<div class="" style="left:791.66px;top:333.20px;width:48.20px;height:67.40px;background:#ebebeb;border:1px solid #d4d4d4;border-radius:4px"></div>
<div class="" style="left:792.16px;top:384.00px;width:47.30px;height:16.30px;background:#ffbb00;border-radius:1.5px 1.5px 3px 3px"></div>
<span class="t" style="left:808.61px;top:364.22px;font-size:6.6px;font-weight:700;color:#222;transform:scaleX(0.9815);">1244</span>
<div class="" style="left:812.16px;top:410.70px;width:5.60px;height:62.30px;background:#3b3b3b;border-radius:3px"></div>
<div class="" style="left:812.16px;top:455.00px;width:5.60px;height:18.00px;background:#ffc533;border:0.8px solid #e3ab0a;border-radius:0 0 3px 3px"></div>
<div class="" style="left:809.96px;top:450.00px;width:10.00px;height:10.00px;background:#ffc940;border-radius:50%"></div>
<span class="t" style="left:807.56px;top:476.22px;font-size:6.6px;color:#222;transform:scaleX(1.0087);">1244</span>
<span class="t" style="left:870.52px;top:321.72px;font-size:8.6px;transform:scaleX(0.9203);">3</span>
<div class="" style="left:849.02px;top:333.20px;width:48.20px;height:67.40px;background:#ebebeb;border:1px solid #d4d4d4;border-radius:4px"></div>
<div class="" style="left:849.52px;top:384.00px;width:47.30px;height:16.30px;background:#ffbb00;border-radius:1.5px 1.5px 3px 3px"></div>
<span class="t" style="left:865.97px;top:364.22px;font-size:6.6px;font-weight:700;color:#222;transform:scaleX(0.9815);">1244</span>
<div class="" style="left:869.62px;top:410.70px;width:5.60px;height:62.30px;background:#3b3b3b;border-radius:3px"></div>
<div class="" style="left:869.62px;top:455.00px;width:5.60px;height:18.00px;background:#ffc533;border:0.8px solid #e3ab0a;border-radius:0 0 3px 3px"></div>
<div class="" style="left:867.42px;top:450.00px;width:10.00px;height:10.00px;background:#ffc940;border-radius:50%"></div>
<span class="t" style="left:865.02px;top:476.22px;font-size:6.6px;color:#222;transform:scaleX(1.0087);">1244</span>
<span class="t" style="left:927.98px;top:321.72px;font-size:8.6px;transform:scaleX(0.9203);">4</span>
<div class="" style="left:906.38px;top:333.20px;width:48.20px;height:67.40px;background:#ebebeb;border:1px solid #d4d4d4;border-radius:4px"></div>
<div class="" style="left:906.88px;top:384.00px;width:47.30px;height:16.30px;background:#ffbb00;border-radius:1.5px 1.5px 3px 3px"></div>
<span class="t" style="left:923.33px;top:364.22px;font-size:6.6px;font-weight:700;color:#222;transform:scaleX(0.9815);">1244</span>
<div class="" style="left:927.08px;top:410.70px;width:5.60px;height:62.30px;background:#3b3b3b;border-radius:3px"></div>
<div class="" style="left:927.08px;top:455.00px;width:5.60px;height:18.00px;background:#ffc533;border:0.8px solid #e3ab0a;border-radius:0 0 3px 3px"></div>
<div class="" style="left:924.88px;top:450.00px;width:10.00px;height:10.00px;background:#ffc940;border-radius:50%"></div>
<span class="t" style="left:922.48px;top:476.22px;font-size:6.6px;color:#222;transform:scaleX(1.0087);">1244</span>
<span class="t" style="left:985.44px;top:321.72px;font-size:8.6px;transform:scaleX(0.9203);">5</span>
<div class="" style="left:963.74px;top:333.20px;width:48.20px;height:67.40px;background:#ebebeb;border:1px solid #d4d4d4;border-radius:4px"></div>
<div class="" style="left:985.14px;top:410.70px;width:4.40px;height:60.30px;background:#ececec;border:1px solid #dcdcdc;border-radius:3px"></div>
<div class="" style="left:982.34px;top:462.50px;width:10.00px;height:10.00px;background:#c9c9c9;border-radius:50%"></div>
<span class="t" style="left:979.94px;top:476.22px;font-size:6.6px;color:#222;transform:scaleX(1.0087);">1000</span>
<span class="t" style="left:1042.90px;top:321.72px;font-size:8.6px;transform:scaleX(0.9203);">6</span>
<div class="" style="left:1021.10px;top:333.20px;width:48.20px;height:67.40px;background:#ebebeb;border:1px solid #d4d4d4;border-radius:4px"></div>
<div class="" style="left:1042.60px;top:410.70px;width:4.40px;height:60.30px;background:#ececec;border:1px solid #dcdcdc;border-radius:3px"></div>
<div class="" style="left:1039.80px;top:462.50px;width:10.00px;height:10.00px;background:#c9c9c9;border-radius:50%"></div>
<span class="t" style="left:1037.40px;top:476.22px;font-size:6.6px;color:#222;transform:scaleX(1.0087);">1000</span>
<span class="t" style="left:1100.36px;top:321.72px;font-size:8.6px;transform:scaleX(0.9203);">7</span>
<div class="" style="left:1078.46px;top:333.20px;width:48.20px;height:67.40px;background:#ebebeb;border:1px solid #d4d4d4;border-radius:4px"></div>
<div class="" style="left:1100.06px;top:410.70px;width:4.40px;height:60.30px;background:#ececec;border:1px solid #dcdcdc;border-radius:3px"></div>
<div class="" style="left:1097.26px;top:462.50px;width:10.00px;height:10.00px;background:#c9c9c9;border-radius:50%"></div>
<span class="t" style="left:1094.86px;top:476.22px;font-size:6.6px;color:#222;transform:scaleX(1.0087);">1000</span>
<span class="t" style="left:1157.82px;top:321.72px;font-size:8.6px;transform:scaleX(0.9203);">8</span>
<div class="" style="left:1135.82px;top:333.20px;width:48.20px;height:67.40px;background:#ebebeb;border:1px solid #d4d4d4;border-radius:4px"></div>
<div class="" style="left:1157.52px;top:410.70px;width:4.40px;height:60.30px;background:#ececec;border:1px solid #dcdcdc;border-radius:3px"></div>
<div class="" style="left:1154.72px;top:462.50px;width:10.00px;height:10.00px;background:#c9c9c9;border-radius:50%"></div>
<span class="t" style="left:1152.32px;top:476.22px;font-size:6.6px;color:#222;transform:scaleX(1.0087);">1000</span>
<div class="" style="left:1214.45px;top:410.70px;width:5.60px;height:62.30px;background:#3b3b3b;border-radius:3px"></div>
<div class="" style="left:1214.45px;top:455.00px;width:5.60px;height:18.00px;background:#ffc533;border:0.8px solid #e3ab0a;border-radius:0 0 3px 3px"></div>
<div class="" style="left:1212.25px;top:450.00px;width:10.00px;height:10.00px;background:#ffc940;border-radius:50%"></div>
<span class="t" style="left:1206.00px;top:477.07px;font-size:6.9px;font-weight:700;transform:scaleX(1.0352);">Master</span>
<div class="" style="left:734.50px;top:499.20px;width:506.10px;height:140.80px;background:#f2dde0;border:1px solid #e03a62;border-radius:4px"></div>
<span class="t" style="left:740.50px;top:505.72px;font-size:8.6px;font-weight:700;transform:scaleX(0.9795);">Motor Test Mode / Arming Notice:</span>
<span class="t" style="left:740.50px;top:527.72px;font-size:8.6px;font-weight:700;color:#e2123f;transform:scaleX(0.9480);">WARNING: Serious risk of injury! Remove all propellers!</span>
<span class="t" style="left:740.50px;top:549.72px;font-size:8.6px;transform:scaleX(0.9799);">• Motors will spin up when armed or when sliders are raised</span>
<span class="t" style="left:740.50px;top:560.72px;font-size:8.6px;transform:scaleX(0.9870);">• Motor test mode will remain active after moving to another Tab</span>
<span class="t" style="left:740.50px;top:570.72px;font-size:8.6px;transform:scaleX(0.9824);">• Hitting any key will stop the motors, but only in the Motors Tab</span>
<span class="t" style="left:740.50px;top:581.72px;font-size:8.6px;transform:scaleX(0.9664);">• Disconnecting the USB cable may not stop the motors!</span>
<div class="" style="left:740.50px;top:593.60px;width:12.70px;height:7.60px;background:#ffbb00;border-radius:4px"></div>
<div class="knob" style="left:746.00px;top:593.20px;width:8.00px;height:8.00px;"></div>
<span class="t" style="left:756.75px;top:592.72px;font-size:8.6px;font-weight:700;transform:scaleX(0.9685);">I understand the risks</span>
<span class="t" style="left:843.50px;top:592.72px;font-size:8.6px;transform:scaleX(0.9798);">, the propellers are removed - enable motor control and arming, and</span>
<div class="" style="left:1262.60px;top:132.00px;width:3.40px;height:417.30px;background:#9a9a9a"></div>
<div class="" style="left:1239.60px;top:445.60px;width:23.20px;height:23.20px;background:#f9f9f9;border-radius:50%;box-shadow:0 1px 4px rgba(0,0,0,.18)"></div>
<div class="" style="left:1239.60px;top:475.70px;width:23.20px;height:23.20px;background:#f9f9f9;border-radius:50%;box-shadow:0 1px 4px rgba(0,0,0,.18)"></div>
<div class="" style="left:1242.40px;top:478.20px;width:17.60px;height:17.60px;background:#ef8fae;border-radius:50%"></div>
<svg style="left:0.00px;top:0.00px" width="1266.00" height="628.00" viewBox="0 0 1266 628" ><g fill="none" stroke="#8a8a8a" stroke-width="0.75"><rect x="1246.4" y="453.2" width="3.2" height="3.2"/><rect x="1246.4" y="458.8" width="3.2" height="3.2"/><rect x="1252.2" y="458.8" width="3.2" height="3.2"/></g><path d="M1254,451.8 L1254.7,453.7 L1256.6,454.4 L1254.7,455.1 L1254,457 L1253.3,455.1 L1251.4,454.4 L1253.3,453.7 Z" fill="#8a8a8a"/><text x="1245.4" y="487.4" font-family="Liberation Sans,Noto Sans CJK SC,sans-serif" font-size="5.6" font-weight="700" fill="#fff">中</text><text x="1252" y="492.4" font-family="Liberation Sans,sans-serif" font-size="5.8" font-weight="700" fill="#fff">A</text><path d="M1253,482.6 L1255.6,482.6 Q1256.6,482.6 1256.6,483.8 L1256.6,484.8 M1249.6,491.6 L1247.4,491.6 Q1246.4,491.6 1246.4,490.6 L1246.4,489.6" fill="none" stroke="#fff" stroke-width="0.7"/></svg>
<div class="" style="left:1101.20px;top:568.30px;width:168.80px;height:35.90px;background:#f2f2f2;border-radius:9px 0 0 0;box-shadow:0 0 4px rgba(0,0,0,.15)"></div>
<div class="" style="left:1112.00px;top:576.50px;width:78.00px;height:19.50px;background:#c2c2c2;border-radius:2px"></div>
<div class="" style="left:1195.50px;top:576.50px;width:60.50px;height:19.50px;background:#ffbb00;border-radius:2px"></div>
<span class="t" style="left:1118.00px;top:581.72px;font-size:8.6px;font-weight:700;color:#555;transform:scaleX(0.9464);">Save and Reboot</span>
<span class="t" style="left:1201.30px;top:581.72px;font-size:8.6px;font-weight:700;color:#111;transform:scaleX(0.9544);">Stop motors</span>
<div class="" style="left:0.00px;top:604.00px;width:1266.00px;height:24.00px;background:#ebebeb;border-radius:0 0 0 6px"></div>
<span class="t" style="left:10.50px;top:612.52px;font-size:9.0px;transform:scaleX(0.9118);">Port utilization:D:25%-U:3%</span>
<span class="t" style="left:124.50px;top:612.52px;font-size:9.0px;transform:scaleX(0.9204);">Connection: 01:54</span>
<span class="t" style="left:204.50px;top:612.52px;font-size:9.0px;transform:scaleX(0.9110);">Packet error:0</span>
<span class="t" style="left:268.75px;top:612.52px;font-size:9.0px;transform:scaleX(0.9125);">I2C error:0</span>
<span class="t" style="left:320.50px;top:612.52px;font-size:9.0px;transform:scaleX(0.8947);">Cycle Time:250</span>
<span class="t" style="left:388.50px;top:612.52px;font-size:9.0px;transform:scaleX(0.8663);">CPU Load:24%</span>
<div class="" style="left:117.10px;top:609.40px;width:0.80px;height:13.60px;background:#d8d8d8"></div>
<div class="" style="left:197.10px;top:609.40px;width:0.80px;height:13.60px;background:#d8d8d8"></div>
<div class="" style="left:261.35px;top:609.40px;width:0.80px;height:13.60px;background:#d8d8d8"></div>
<div class="" style="left:313.35px;top:609.40px;width:0.80px;height:13.60px;background:#d8d8d8"></div>
<div class="" style="left:381.10px;top:609.40px;width:0.80px;height:13.60px;background:#d8d8d8"></div>
<div class="" style="left:860.35px;top:609.40px;width:0.80px;height:13.60px;background:#d8d8d8"></div>
<span class="t" style="left:867.50px;top:612.52px;font-size:9.0px;transform:scaleX(0.8670);">App Version: 2025.12.1 (4aba25d) , Firmware: 2025.12.1 BTFL , Target: SPBE/SPEEDYBEEF405V5(STM32F405)</span>
</body></html>
